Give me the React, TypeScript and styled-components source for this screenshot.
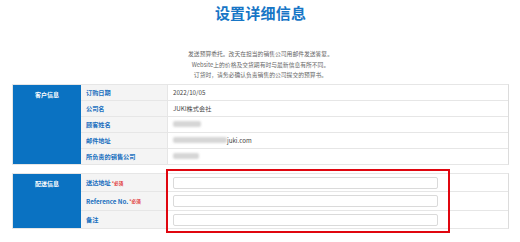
import styled, { createGlobalStyle } from "styled-components";

const GlobalStyle = createGlobalStyle`
  html, body {
    margin: 0;
    padding: 0;
    background: #fff;
  }
  body {
    font-family: "Noto Sans CJK SC", "Liberation Sans", sans-serif;
    color: #333;
  }
`;

const Page = styled.div`
  width: 520px;
  height: 242px;
  box-sizing: border-box;
  padding: 3px 11px 0 12px;
  overflow: hidden;
`;

const Title = styled.h1`
  margin: 0;
  text-align: center;
  font-size: 15px;
  line-height: 20px;
  font-weight: 700;
  color: #1776c6;
  letter-spacing: 0.2px;
`;

const Lead = styled.div`
  margin-top: 26px;
  text-align: center;
  font-size: 5.8px;
  line-height: 10.6px;
  color: #666;
`;

const Section = styled.div<{ $gap?: number }>`
  position: relative;
  display: flex;
  margin-top: ${(p) => p.$gap ?? 0}px;
  border: 1px solid #e6e6e6;
  border-right-color: #dcdcdc;
`;

const Head = styled.div`
  width: 68px;
  flex: none;
  background: #0a72c2;
  color: #fff;
  font-size: 6px;
  font-weight: 700;
  text-align: center;
  padding-top: 5px;
  box-sizing: border-box;
`;

const Rows = styled.div`
  flex: 1;
  display: flex;
  flex-direction: column;
`;

const Row = styled.div<{ $h: number }>`
  display: flex;
  height: ${(p) => p.$h}px;
  & + & {
    border-top: 1px solid #e6e6e6;
  }
`;

const Label = styled.div`
  width: 87px;
  flex: none;
  box-sizing: border-box;
  background: #f4f4f4;
  border-right: 1px solid #e6e6e6;
  padding-left: 5px;
  display: flex;
  align-items: center;
  font-size: 6.2px;
  font-weight: 700;
  color: #1a70bf;
  white-space: nowrap;
`;

const Required = styled.span`
  color: #e03030;
  font-size: 4.6px;
  margin-left: 1px;
`;

const Value = styled.div`
  flex: 1;
  display: flex;
  align-items: center;
  padding-left: 5px;
  font-size: 6.2px;
  color: #444;
`;

const Blur = styled.span<{ $w: number }>`
  display: inline-block;
  width: ${(p) => p.$w}px;
  height: 6px;
  background: #d6d6d6;
  border-radius: 2px;
  filter: blur(1.2px);
`;

const Input = styled.div`
  width: 265px;
  height: 12px;
  box-sizing: border-box;
  border: 1px solid #dadada;
  border-radius: 2px;
  background: #fff;
`;

const Mark = styled.div`
  position: absolute;
  left: 153px;
  top: -5px;
  width: 284px;
  height: 64px;
  box-sizing: border-box;
  border: 2px solid #e0060f;
  pointer-events: none;
`;

const customer: [string, React.ReactNode][] = [
  ["订购日期", "2022/10/05"],
  ["公司名", "JUKI株式会社"],
  ["顾客姓名", <Blur $w={28} />],
  ["邮件地址", <><Blur $w={54} />juki.com</>],
  ["所负责的销售公司", <Blur $w={26} />],
];

const delivery: [string, boolean][] = [
  ["送达地址", true],
  ["Reference No.", true],
  ["备注", false],
];

export default function App() {
  return (
    <>
      <GlobalStyle />
      <Page>
        <Title>设置详细信息</Title>
        <Lead>
          发送预算委托。改天在担当的销售公司用邮件发送答复。
          <br />
          Website上的价格及交货期有时与最新信息有所不同。
          <br />
          订货时，请务必确认负责销售的公司提交的预算书。
        </Lead>
        <Section $gap={3}>
          <Head>客户信息</Head>
          <Rows>
            {customer.map(([k, v]) => (
              <Row key={k} $h={15}>
                <Label>{k}</Label>
                <Value>{v}</Value>
              </Row>
            ))}
          </Rows>
        </Section>
        <Section $gap={8}>
          <Head>配送信息</Head>
          <Rows>
            {delivery.map(([k, req]) => (
              <Row key={k} $h={17.5}>
                <Label>
                  {k}
                  {req && <Required>*必须</Required>}
                </Label>
                <Value>
                  <Input />
                </Value>
              </Row>
            ))}
          </Rows>
          <Mark />
        </Section>
      </Page>
    </>
  );
}
